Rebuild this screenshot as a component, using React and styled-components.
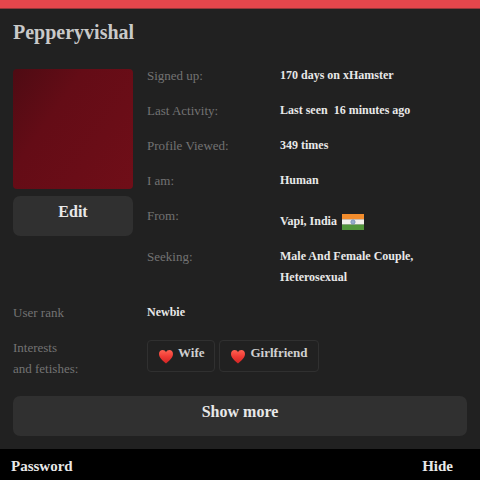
import React from 'react';
import styled, { createGlobalStyle } from 'styled-components';

const GlobalStyle = createGlobalStyle`
    * {
        box-sizing: border-box;
    }

    body {
        margin: 0;
        background: #000;
        color: #e8e8e8;
        font-family: "Liberation Serif", "Times New Roman", serif;
        font-size: 13px;
        line-height: 21px;
    }
`;

const TopBar = styled.div`
    height: 9px;
    background: #e5464c;
    border-bottom: 1px solid #93373a;
`;

const Panel = styled.main`
    padding: 12px 13px 13px;
    background: #212121;
`;

const UserName = styled.h1`
    margin: 0 0 21px;
    font-size: 20px;
    line-height: 23px;
    color: #c9c9c9;
`;

// avatar on the left, facts on the right
const Profile = styled.section`
    display: grid;
    grid-template-columns: 120px 1fr;
    column-gap: 14px;
`;

const AvatarColumn = styled.div`
    display: flex;
    flex-direction: column;
    gap: 7px;
    padding-top: 4px;
`;

const Avatar = styled.div`
    height: 120px;
    border-radius: 4px;
    background: linear-gradient(125deg, #4e0b13 0%, #640c16 35%, #700e18 100%);
`;

const Button = styled.button`
    width: 100%;
    height: 40px;
    padding: 0 0 9px;
    border: none;
    border-radius: 7px;
    background: #303030;
    color: #e8e8e8;
    font-family: inherit;
    font-size: 16px;
    font-weight: bold;
    cursor: pointer;
`;

const Facts = styled.dl`
    display: flex;
    flex-direction: column;
    gap: 14px;
    margin: ${props => (props.$spaced ? '14px 0 17px' : '0')};
`;

const Fact = styled.div`
    display: grid;
    grid-template-columns: ${props => (props.$wide ? '134px' : '133px')} 1fr;
`;

const Label = styled.dt`
    color: #737373;
`;

const Value = styled.dd`
    display: flex;
    align-items: center;
    gap: 5px;
    margin: 0;
    padding-top: ${props => (props.$low ? '6px' : '0')};
    font-size: 12px;
    font-weight: bold;
    white-space: pre-wrap;
`;

const Flag = styled.svg`
    width: 22px;
    height: 16px;
`;

const Tags = styled.div`
    display: flex;
    gap: 4px;
    padding-bottom: 4px;
`;

const Tag = styled.a`
    display: flex;
    gap: 4px;
    height: 32px;
    padding: 1px 10px;
    border: 1px solid #303030;
    border-radius: 4px;
    color: #d0d0d0;
    font-size: 13px;
    text-decoration: none;
`;

const Heart = styled.svg`
    width: 16px;
    height: 15px;
    margin-top: 7px;
`;

const Footer = styled.footer`
    display: flex;
    justify-content: space-between;
    padding: 7px 27px 3px 11px;
    background: #000;
    font-size: 15px;
    font-weight: bold;
`;

const FooterButton = styled.button`
    padding: 0;
    border: none;
    background: none;
    color: inherit;
    font: inherit;
    cursor: pointer;
`;

const IndiaFlag = () => (
    <Flag viewBox="0 0 22 16" role="img" aria-label="India">
        <rect width="22" height="5.4" fill="#f28c2c" />
        <rect y="5.3" width="22" height="5.4" fill="#f3f1ed" />
        <rect y="10.6" width="22" height="5.4" fill="#52963a" />
        <circle cx="11" cy="8" r="2.1" fill="#b4c4d8" stroke="#6583b0" strokeWidth="0.8" />
        <path d="M11 6v4M9 8h4" stroke="#6583b0" strokeWidth="0.4" />
    </Flag>
);

const HeartIcon = () => (
    <Heart viewBox="0 0 16 15" aria-hidden="true">
        <defs>
            <linearGradient id="heart" x1="0" y1="0" x2="0" y2="1">
                <stop offset="0" stopColor="#ff6252" />
                <stop offset="0.5" stopColor="#ef3a34" />
                <stop offset="1" stopColor="#cf2524" />
            </linearGradient>
        </defs>
        <path
            d="M8 14.5C5.8 12.6 1 9.2 1 5C1 2.6 2.6 1 4.6 1C6.2 1 7.4 1.9 8 3.3C8.6 1.9 9.8 1 11.4 1C13.4 1 15 2.6 15 5C15 9.2 10.2 12.6 8 14.5Z"
            fill="url(#heart)"
        />
    </Heart>
);

const facts = [
    { label: 'Signed up:', value: '170 days on xHamster' },
    { label: 'Last Activity:', value: 'Last seen  16 minutes ago' },
    { label: 'Profile Viewed:', value: '349 times' },
    { label: 'I am:', value: 'Human' },
    { label: 'From:', value: 'Vapi, India', flag: true },
    { label: 'Seeking:', value: 'Male And Female Couple,\nHeterosexual' },
];

const interests = ['Wife', 'Girlfriend'];

const App = () => {
    return (
        <>
            <GlobalStyle />
            <TopBar />
            <Panel>
                <UserName>Pepperyvishal</UserName>
                <Profile>
                    <AvatarColumn>
                        <Avatar />
                        <Button type="button">Edit</Button>
                    </AvatarColumn>
                    <Facts>
                        {facts.map(({ label, value, flag }) => (
                            <Fact key={label}>
                                <Label>{label}</Label>
                                <Value $low={flag}>
                                    {value}
                                    {flag && <IndiaFlag />}
                                </Value>
                            </Fact>
                        ))}
                    </Facts>
                </Profile>
                <Facts $spaced>
                    <Fact $wide>
                        <Label>User rank</Label>
                        <Value>Newbie</Value>
                    </Fact>
                    <Fact $wide>
                        <Label>Interests<br />and fetishes:</Label>
                        <Value>
                            <Tags>
                                {interests.map(name => (
                                    <Tag key={name} href="#">
                                        <HeartIcon />
                                        {name}
                                    </Tag>
                                ))}
                            </Tags>
                        </Value>
                    </Fact>
                </Facts>
                <Button type="button">Show more</Button>
            </Panel>
            <Footer>
                <span>Password</span>
                <FooterButton type="button">Hide</FooterButton>
            </Footer>
        </>
    );
};

export default App;
